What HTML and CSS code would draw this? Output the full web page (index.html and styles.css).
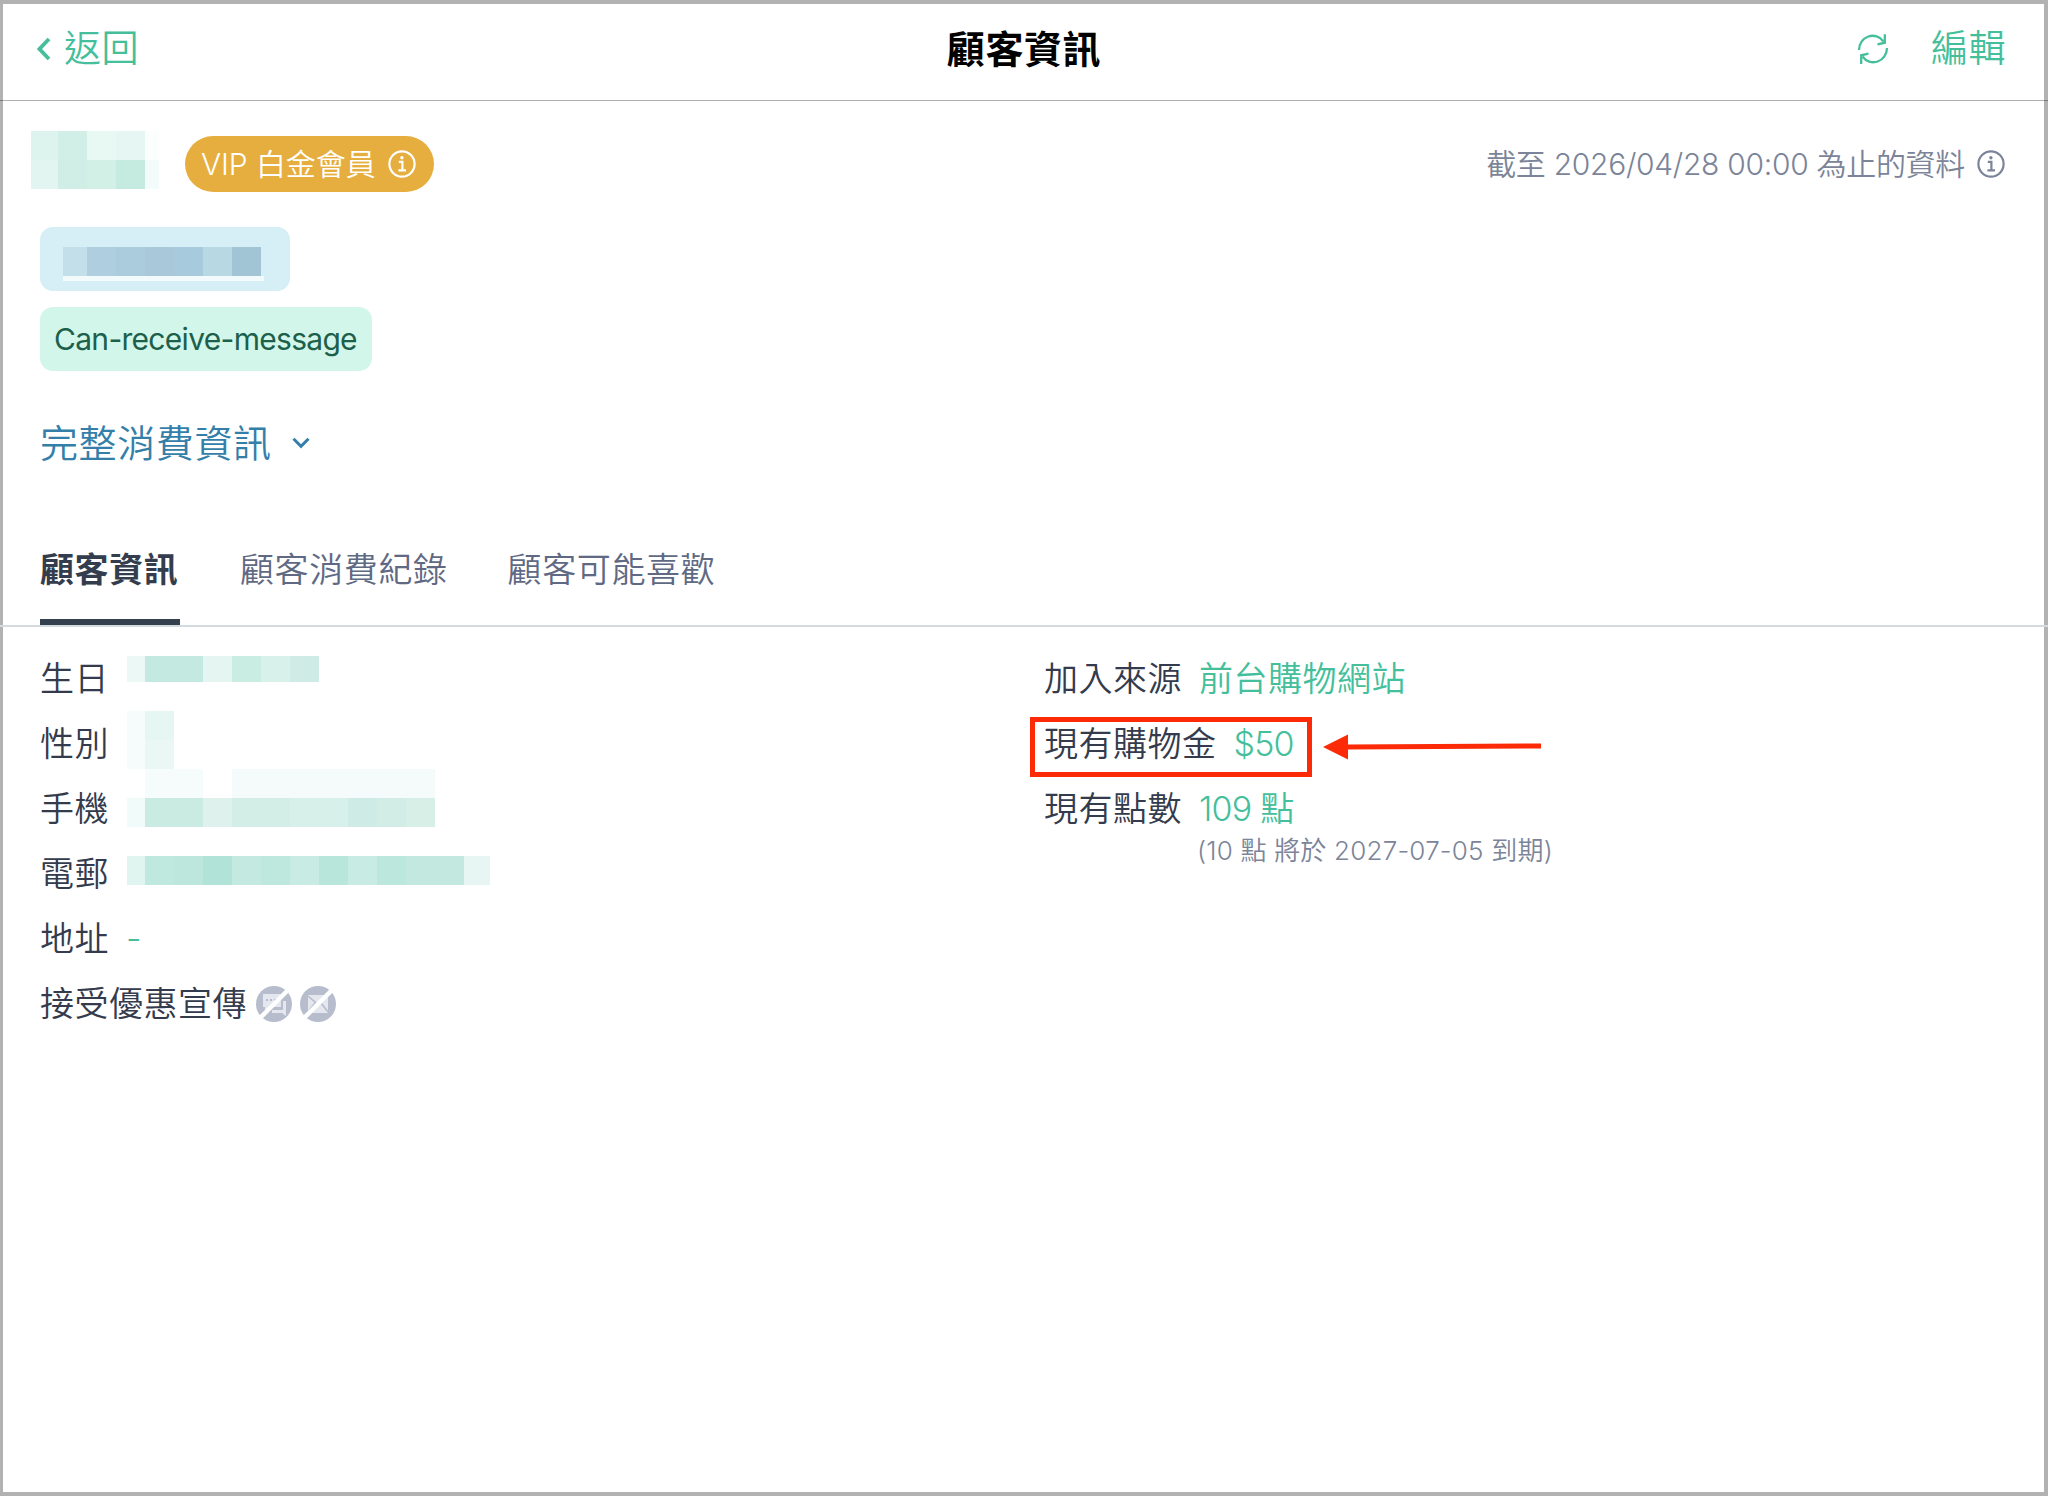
FILE: index.html
```html
<!DOCTYPE html>
<html lang="zh-Hant">
<head>
    <meta charset="UTF-8">
    <meta name="viewport" content="width=device-width, initial-scale=1.0">
    <title>顧客資訊</title>
    <link rel="stylesheet" href="styles.css">
</head>
<body>
    <div class="app">
        <header class="nav-bar">
            <a class="nav-back">
                <svg class="back-icon" width="14" height="24" viewBox="0 0 14 24"><path d="M12 2 L2.5 12 L12 22"/></svg>
                <span>返回</span>
            </a>
            <h1 class="nav-title">顧客資訊</h1>
            <div class="nav-actions">
                <svg class="refresh-icon" width="32" height="32" viewBox="0 0 32 32">
                    <path d="M2 17 A13.6 14.3 0 0 1 26.5 8.5"/>
                    <path d="M27.8 1.2 V9.7 L20.5 11.3"/>
                    <path d="M30 15 A13.6 14.3 0 0 1 5.5 23.5"/>
                    <path d="M4.2 31 V22.3 L11.5 20.7"/>
                </svg>
                <span>編輯</span>
            </div>
        </header>

        <section class="summary">
            <div class="summary-row">
                <svg class="name-mask" width="128" height="58" viewBox="0 0 128 58">
                    <rect x="0" y="0" width="27" height="29" fill="#dcf4ed"/>
                    <rect x="27" y="0" width="29" height="29" fill="#d2efe7"/>
                    <rect x="56" y="0" width="29" height="29" fill="#e8f8f3"/>
                    <rect x="85" y="0" width="29" height="29" fill="#e6f6f2"/>
                    <rect x="114" y="0" width="14" height="29" fill="#fbfefd"/>
                    <rect x="0" y="29" width="27" height="29" fill="#e2f5f0"/>
                    <rect x="27" y="29" width="29" height="29" fill="#d0ede6"/>
                    <rect x="56" y="29" width="29" height="29" fill="#d3f0e7"/>
                    <rect x="85" y="29" width="29" height="29" fill="#c5eae0"/>
                    <rect x="114" y="29" width="14" height="29" fill="#f3fbfb"/>
                </svg>
                <div class="vip-badge">
                    <span>VIP 白金會員</span>
                    <svg class="info-icon" width="28" height="28" viewBox="0 0 28 28"><circle cx="14" cy="14" r="12.6"/><path d="M10.8 11.8 H14.4 V20.2 M10.4 20.4 H18"/><circle class="dot" cx="13.9" cy="7.7" r="1.7"/></svg>
                </div>
                <div class="data-time">
                    <span>截至 2026/04/28 00:00 為止的資料</span>
                    <svg class="info-icon" width="28" height="28" viewBox="0 0 28 28"><circle cx="14" cy="14" r="12.6"/><path d="M10.8 11.8 H14.4 V20.2 M10.4 20.4 H18"/><circle class="dot" cx="13.9" cy="7.7" r="1.7"/></svg>
                </div>
            </div>

            <div class="tags">
                <div class="tag tag-blue">
                    <svg width="201" height="34" viewBox="0 0 201 34">
                        <rect x="0" width="24" height="29" fill="#c3e0ea"/>
                        <rect x="24" width="29" height="29" fill="#afcfe0"/>
                        <rect x="53" width="29" height="29" fill="#aaccdc"/>
                        <rect x="82" width="29" height="29" fill="#a9c9da"/>
                        <rect x="111" width="29" height="29" fill="#a7cbdc"/>
                        <rect x="140" width="29" height="29" fill="#b8d8e4"/>
                        <rect x="169" width="29" height="29" fill="#a2c5d6"/>
                        <rect x="0" y="29" width="201" height="5" fill="#f2fafc"/>
                    </svg>
                </div>
                <div class="tag tag-green">Can-receive-message</div>
            </div>

            <a class="spend-toggle">
                <span>完整消費資訊</span>
                <svg width="18" height="12" viewBox="0 0 18 12"><path d="M1.5 1.8 L9 9.3 L16.5 1.8"/></svg>
            </a>
        </section>

        <nav class="tabs">
            <a class="tab active">顧客資訊</a>
            <a class="tab">顧客消費紀錄</a>
            <a class="tab">顧客可能喜歡</a>
        </nav>

        <main class="details">
            <div class="column">
                <div class="row">
                    <span class="label">生日</span>
                    <svg class="mask mask-birthday" width="192" height="26" viewBox="0 0 192 26">
                        <rect x="0" width="18" height="26" fill="#ebf8f5"/>
                        <rect x="18" width="58" height="26" fill="#c4e9e0"/>
                        <rect x="76" width="29" height="26" fill="#e5f5f2"/>
                        <rect x="105" width="29" height="26" fill="#c9ece3"/>
                        <rect x="134" width="29" height="26" fill="#d9f1eb"/>
                        <rect x="163" width="29" height="26" fill="#ceebe5"/>
                    </svg>
                </div>
                <div class="row">
                    <span class="label">性別</span>
                    <svg class="mask mask-gender" width="47" height="58" viewBox="0 0 47 58">
                        <rect width="18" height="58" fill="#f5fcfb"/>
                        <rect x="18" width="29" height="29" fill="#e6f6f3"/>
                        <rect x="18" y="29" width="29" height="29" fill="#ebf7f5"/>
                    </svg>
                </div>
                <div class="row">
                    <span class="label">手機</span>
                    <svg class="mask mask-phone" width="308" height="58" viewBox="0 0 308 58">
                        <rect x="18" width="58" height="29" fill="#f6fcfc"/>
                        <rect x="105" width="203" height="29" fill="#f5fbfb"/>
                        <rect x="0" y="29" width="18" height="29" fill="#f1fbf9"/>
                        <rect x="18" y="29" width="58" height="29" fill="#caebe2"/>
                        <rect x="76" y="29" width="29" height="29" fill="#def1ed"/>
                        <rect x="105" y="29" width="58" height="29" fill="#d3eee7"/>
                        <rect x="163" y="29" width="58" height="29" fill="#d8f0ea"/>
                        <rect x="221" y="29" width="29" height="29" fill="#ceebe5"/>
                        <rect x="250" y="29" width="29" height="29" fill="#d2ece6"/>
                        <rect x="279" y="29" width="29" height="29" fill="#d8efe8"/>
                    </svg>
                </div>
                <div class="row">
                    <span class="label">電郵</span>
                    <svg class="mask mask-email" width="363" height="29" viewBox="0 0 363 29">
                        <rect x="0" width="18" height="29" fill="#e1f5f0"/>
                        <rect x="18" width="29" height="29" fill="#bfe9df"/>
                        <rect x="47" width="29" height="29" fill="#bde7dd"/>
                        <rect x="76" width="29" height="29" fill="#b2e3d8"/>
                        <rect x="105" width="29" height="29" fill="#c4e9e0"/>
                        <rect x="134" width="29" height="29" fill="#bee7dd"/>
                        <rect x="163" width="29" height="29" fill="#c8ebe3"/>
                        <rect x="192" width="29" height="29" fill="#b8e6db"/>
                        <rect x="221" width="29" height="29" fill="#c8ebe3"/>
                        <rect x="250" width="29" height="29" fill="#bce7dd"/>
                        <rect x="279" width="58" height="29" fill="#c2e8df"/>
                        <rect x="337" width="26" height="29" fill="#e7f6f3"/>
                    </svg>
                </div>
                <div class="row">
                    <span class="label">地址</span>
                    <span class="value">-</span>
                </div>
                <div class="row">
                    <span class="label">接受優惠宣傳</span>
                    <div class="channels">
                        <svg width="36" height="36" viewBox="0 0 36 36">
                            <circle cx="18" cy="18" r="18" fill="#b7bdcc"/>
                            <path d="M7 8 H25 V21 H13 L9 25 V21 H7 Z" fill="#e4e7ee"/>
                            <path d="M27 15 H30 V30 L26 27 H16 V24 H27 Z" fill="#e4e7ee"/>
                            <path d="M10 14 h2 M14 14 h2 M18 14 h2" stroke="#b7bdcc" stroke-width="2"/>
                            <path d="M4 32 L32 4" stroke="#fff" stroke-width="4.5"/>
                        </svg>
                        <svg width="36" height="36" viewBox="0 0 36 36">
                            <circle cx="18" cy="18" r="18" fill="#b7bdcc"/>
                            <rect x="8" y="9" width="20" height="18" fill="#e4e7ee"/>
                            <path d="M8 10 L18 18.5 L28 10 M8 26 L15 17 M28 26 L21 17" fill="none" stroke="#b7bdcc" stroke-width="1.6"/>
                            <path d="M4 32 L32 4" stroke="#fff" stroke-width="4.5"/>
                        </svg>
                    </div>
                </div>
            </div>

            <div class="column">
                <div class="row">
                    <span class="label">加入來源</span>
                    <span class="value">前台購物網站</span>
                </div>
                <div class="row highlighted">
                    <span class="label">現有購物金</span>
                    <span class="value amount">$50</span>
                    <div class="highlight-box"></div>
                    <svg class="highlight-arrow" width="220" height="26" viewBox="0 0 220 26">
                        <path d="M0 13 L25 0.5 V25.5 Z" fill="#fc2a06"/>
                        <path d="M24 13 L218 12" stroke="#fc2a06" stroke-width="5"/>
                    </svg>
                </div>
                <div class="row">
                    <span class="label">現有點數</span>
                    <span class="value amount">109 點</span>
                </div>
                <p class="expiry">(10 點 將於 2027-07-05 到期)</p>
            </div>
        </main>
    </div>
</body>
</html>
```

FILE: styles.css
```css
* {
    box-sizing: border-box;
}

body {
    margin: 0;
    font-family: Inter, "Noto Sans CJK TC", sans-serif;
    font-weight: 350;
    color: #343b4c;
}

.app {
    height: 1496px;
    background: #fff;
    border: 4px solid #b2b2b2;
    border-left-width: 3px;
}

svg {
    display: block;
    flex: none;
}

/* Top bar */
.nav-bar {
    display: grid;
    grid-template-columns: 1fr auto 1fr;
    align-items: center;
    height: 97px;
    margin: 0 -4px 0 -3px;
    padding: 0 42px 6px 37px;
    border-bottom: 1px solid rgba(0, 0, 0, 0.31);
    font-size: 37px;
    line-height: 56px;
    letter-spacing: 0.5px;
    color: #45bf9b;
}

.nav-back {
    display: flex;
    align-items: center;
    gap: 13px;
}

.back-icon path {
    fill: none;
    stroke: #45bf9b;
    stroke-width: 3.8;
}

.nav-title {
    margin: 0 0 0 5px;
    font-size: 38px;
    font-weight: 600;
    letter-spacing: 0.6px;
    color: #000;
}

.nav-actions {
    display: flex;
    justify-content: flex-end;
    align-items: center;
    gap: 42px;
}

.refresh-icon path {
    fill: none;
    stroke: #45bf9b;
    stroke-width: 2.3;
}

/* Customer summary */
.summary {
    padding: 30px 39px 0 28px;
}

.summary-row {
    display: flex;
    height: 61px;
}

.vip-badge {
    display: flex;
    align-items: center;
    justify-content: space-between;
    width: 249px;
    height: 56px;
    margin: 5px 0 0 26px;
    padding: 0 18px 0 16px;
    border-radius: 28px;
    background: #e6ae3e;
    color: #fff;
    font-size: 30px;
    line-height: 56px;
    letter-spacing: -0.1px;
}

.data-time {
    display: flex;
    align-items: center;
    gap: 12px;
    height: 56px;
    margin: 5px 0 0 auto;
    font-size: 30px;
    line-height: 56px;
    letter-spacing: -0.3px;
    color: #7b8498;
}

.info-icon {
    fill: none;
    stroke: currentColor;
    stroke-width: 2.2;
}

.info-icon .dot {
    fill: currentColor;
    stroke: none;
}

.tags {
    display: flex;
    flex-direction: column;
    align-items: flex-start;
    gap: 16px;
    margin: 35px 0 0 9px;
}

.tag {
    height: 64px;
    border-radius: 13px;
}

.tag-blue {
    width: 250px;
    padding: 20px 23px 0;
    background: #d6eef6;
}

.tag-green {
    width: 332px;
    padding-left: 14px;
    background: #d3f6ea;
    color: #1c5f4a;
    font-size: 30px;
    font-weight: 400;
    line-height: 64px;
    letter-spacing: -0.7px;
}

.spend-toggle {
    display: flex;
    align-items: center;
    gap: 20px;
    height: 60px;
    margin: 42px 0 0 9px;
    font-size: 38px;
    line-height: 58px;
    letter-spacing: 0.6px;
    color: #347fa9;
}

.spend-toggle path {
    fill: none;
    stroke: #347fa9;
    stroke-width: 3;
}

/* Tabs */
.tabs {
    display: flex;
    gap: 60px;
    height: 154px;
    margin: 0 -4px 0 -3px;
    padding: 54px 40px 0;
    border-bottom: 2px solid #d3dbe1;
    font-size: 34px;
    letter-spacing: 0.6px;
    color: #606983;
}

.tab {
    height: 98px;
    padding-top: 16px;
    line-height: 54px;
}

.tab.active {
    width: 140px;
    border-bottom: 6px solid #35404f;
    color: #343d4d;
    font-weight: 700;
}

/* Details */
.details {
    display: grid;
    grid-template-columns: 1004px 1fr;
    padding: 19px 0 0 37px;
    font-size: 34px;
}

.row {
    display: flex;
    align-items: center;
    height: 65px;
    line-height: 50px;
}

.label {
    letter-spacing: 0.5px;
}

.value {
    margin-left: 17px;
    letter-spacing: 0.5px;
    color: #45bf9b;
}

.amount {
    letter-spacing: -0.8px;
}

.mask {
    align-self: flex-start;
    margin-left: 18px;
}

.mask-birthday {
    margin-top: 10px;
}

.mask-phone {
    margin-top: -7px;
}

.mask-email {
    margin-top: 15px;
}

.channels {
    display: flex;
    gap: 8px;
    margin-left: 9px;
}

.highlighted {
    position: relative;
}

.highlight-box {
    position: absolute;
    top: 6px;
    left: -14px;
    width: 282px;
    height: 60px;
    border: 5px solid #fc2a06;
}

.highlight-arrow {
    position: absolute;
    top: 23px;
    left: 279px;
}

.expiry {
    margin: -10px 0 0 153px;
    font-size: 26px;
    line-height: 40px;
    letter-spacing: 0.2px;
    color: #7b8498;
}
```
